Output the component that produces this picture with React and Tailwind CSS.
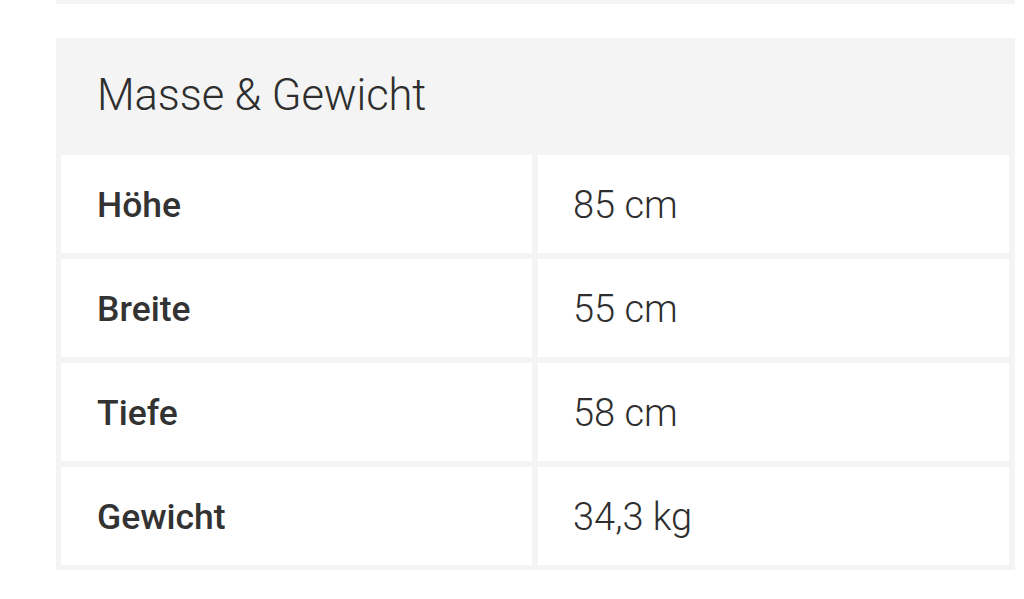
export default function App() {
  const rows = [
    ["Höhe", "85 cm"],
    ["Breite", "55 cm"],
    ["Tiefe", "58 cm"],
    ["Gewicht", "34,3 kg"],
  ];
  return (
    <div className="w-[1024px] h-[599px] bg-white overflow-hidden text-[#333333]" style={{ fontFamily: "Roboto, 'Liberation Sans', sans-serif" }}>
      <div className="ml-[56px] w-[959px] h-[4px] bg-[#f4f4f4]" />
      <div className="ml-[56px] mt-[34px] w-[959px] bg-[#f4f4f4] pl-[5px] pr-[6px] pb-[5px]">
        <div className="h-[117px] flex items-center pl-[36px] pb-[2px]">
          <h2 className="text-[43.5px] font-light tracking-[-0.1px] leading-none text-[#2e2e2e]">Masse &amp; Gewicht</h2>
        </div>
        <div className="flex flex-col gap-[6px]">
          {rows.map(([k, v]) => (
            <div key={k} className="grid grid-cols-2 gap-[6px] h-[98px]">
              <div className="bg-white flex items-center pl-[36px] pt-[3px]">
                <span className="text-[35.5px] font-medium leading-none text-[#333333]">{k}</span>
              </div>
              <div className="bg-white flex items-center pl-[35px] pt-[1px]">
                <span className="text-[38px] font-light leading-none text-[#2e2e2e]">{v}</span>
              </div>
            </div>
          ))}
        </div>
      </div>
    </div>
  );
}
